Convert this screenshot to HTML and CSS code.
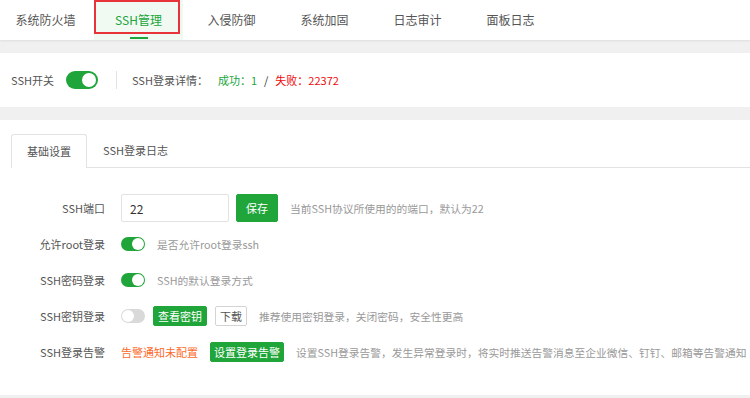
FILE: index.html
```html
<!DOCTYPE html>
<html>
<head>
    <title>安全 - SSH管理</title>
    <link rel="stylesheet" href="styles.css">
</head>
<body>
    <div class="nav">
        <div class="nav-item">系统防火墙</div>
        <div class="nav-item active">SSH管理<span class="mark"></span></div>
        <div class="nav-item">入侵防御</div>
        <div class="nav-item">系统加固</div>
        <div class="nav-item">日志审计</div>
        <div class="nav-item">面板日志</div>
    </div>

    <div class="panel status-bar">
        <span class="status-label">SSH开关</span>
        <span class="switch big on"></span>
        <span class="divider"></span>
        <span class="status-label">SSH登录详情：</span>
        <span class="ok">成功：1</span>
        <span class="slash">/</span>
        <span class="fail">失败：22372</span>
    </div>

    <div class="panel main">
        <div class="tabs">
            <div class="tab active">基础设置</div>
            <div class="tab">SSH登录日志</div>
        </div>

        <div class="form">
            <div class="row">
                <label class="label">SSH端口</label>
                <input class="port-input" type="text" value="22">
                <button class="btn btn-save">保存</button>
                <span class="desc">当前SSH协议所使用的的端口，默认为22</span>
            </div>
            <div class="row">
                <label class="label">允许root登录</label>
                <span class="switch on"></span>
                <span class="desc">是否允许root登录ssh</span>
            </div>
            <div class="row">
                <label class="label">SSH密码登录</label>
                <span class="switch on"></span>
                <span class="desc">SSH的默认登录方式</span>
            </div>
            <div class="row">
                <label class="label">SSH密钥登录</label>
                <span class="switch"></span>
                <button class="btn btn-sm">查看密钥</button>
                <button class="btn btn-sm btn-plain">下载</button>
                <span class="desc">推荐使用密钥登录，关闭密码，安全性更高</span>
            </div>
            <div class="row">
                <label class="label">SSH登录告警</label>
                <span class="warn">告警通知未配置</span>
                <button class="btn btn-sm btn-alarm">设置登录告警</button>
                <span class="desc">设置SSH登录告警，发生异常登录时，将实时推送告警消息至企业微信、钉钉、邮箱等告警通知</span>
            </div>
        </div>
    </div>
</body>
</html>
```

FILE: styles.css
```css
body {
    margin: 0;
    background-color: #f0f0f0;
    font-family: "Noto Sans CJK SC", "Microsoft YaHei", sans-serif;
    font-size: 11px;
    color: #555;
}
.nav {
    display: flex;
    gap: 4px;
    height: 40px;
    padding-left: 1px;
    background-color: #fff;
    box-shadow: 0 1px 2px rgba(0, 0, 0, 0.08);
    margin-bottom: 13px;
}
.nav-item {
    position: relative;
    width: 89px;
    line-height: 40px;
    text-align: center;
    font-size: 12px;
    color: #555;
}
.nav-item.active {
    background-color: #f1f9f3;
    color: #20a53a;
}
.nav-item.active::after {
    content: "";
    position: absolute;
    left: 36px;
    bottom: 1px;
    width: 18px;
    height: 2px;
    background-color: #20a53a;
}
.mark {
    position: absolute;
    left: 0;
    top: 0;
    width: 86px;
    height: 34px;
    box-sizing: border-box;
    border: 2px solid #e8333b;
}
.panel {
    background-color: #fff;
    padding: 0 11px;
}
.status-bar {
    display: flex;
    align-items: center;
    height: 54px;
    margin-bottom: 13px;
}
.status-label {
    color: #555;
}
.switch {
    position: relative;
    display: inline-block;
    flex: none;
    width: 24px;
    height: 14px;
    border-radius: 7px;
    background-color: #d9d9d9;
}
.switch::after {
    content: "";
    position: absolute;
    top: 1px;
    left: 1px;
    width: 12px;
    height: 12px;
    border-radius: 50%;
    background-color: #fff;
}
.switch.on {
    background-color: #20a53a;
}
.switch.on::after {
    left: 11px;
}
.switch.big {
    width: 32px;
    height: 18px;
    border-radius: 9px;
    margin-left: 12px;
}
.switch.big::after {
    top: 2px;
    left: 2px;
    width: 14px;
    height: 14px;
}
.switch.big.on::after {
    left: 16px;
}
.divider {
    width: 1px;
    height: 18px;
    background-color: #e2e2e2;
    margin: 0 15px 0 18px;
}
.ok {
    color: #20a53a;
    margin-left: 10px;
}
.slash {
    color: #333;
    margin: 0 7px;
}
.fail {
    color: #ef0808;
}
.main {
    height: 275px;
    padding-top: 14px;
    box-sizing: border-box;
}
.tabs {
    display: flex;
    border-bottom: 1px solid #e2e2e2;
    margin-right: -11px;
}
.tab {
    height: 32px;
    line-height: 32px;
    padding: 0 16px;
    color: #555;
}
.tab.active {
    border: 1px solid #e2e2e2;
    border-bottom: none;
    border-radius: 3px 3px 0 0;
    background-color: #fff;
    margin-bottom: -1px;
    height: 33px;
    padding: 0 15px;
}
.form {
    margin-top: 26px;
}
.row {
    display: flex;
    align-items: center;
    height: 28px;
    margin-bottom: 8px;
    white-space: nowrap;
}
.label {
    width: 94px;
    flex: none;
    margin-right: 16px;
    text-align: right;
    color: #555;
}
.port-input {
    width: 108px;
    height: 28px;
    box-sizing: border-box;
    border: 1px solid #e2e2e2;
    border-radius: 2px;
    padding: 0 8px;
    font-family: inherit;
    font-size: 12px;
    color: #333;
    outline: none;
}
.btn {
    font-family: inherit;
    font-size: 11px;
    color: #fff;
    background-color: #20a53a;
    border: 1px solid #20a53a;
    border-radius: 2px;
    cursor: pointer;
}
.btn-save {
    height: 28px;
    padding: 0 9px;
    margin-left: 7px;
}
.btn-sm {
    height: 20px;
    padding: 0 4px;
    margin-left: 8px;
    line-height: 18px;
}
.btn-plain {
    background-color: #fff;
    border-color: #d4d4d4;
    color: #555;
}
.btn-alarm {
    margin-left: 12px;
    padding: 0 3px;
}
.desc {
    color: #999;
    font-size: 10.75px;
    margin-left: 12px;
}
.warn {
    color: #fc6a2c;
}
```
